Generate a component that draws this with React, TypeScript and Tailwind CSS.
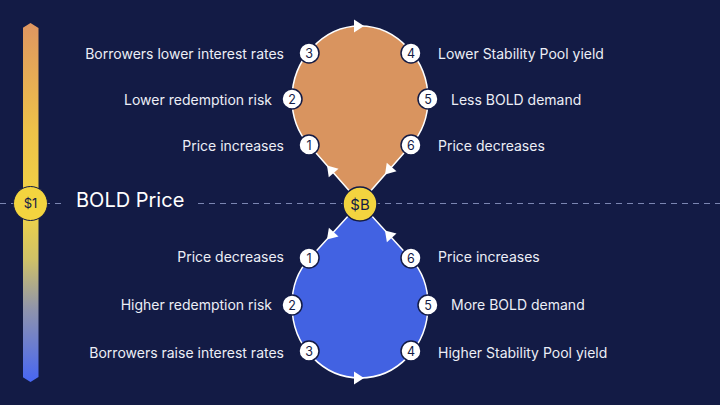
import React from "react";

type Row = { text: string; inner: boolean };

const topLeft: Row[] = [
  { text: "Borrowers lower interest rates", inner: false },
  { text: "Lower redemption risk", inner: true },
  { text: "Price increases", inner: false },
];
const topRight: Row[] = [
  { text: "Lower Stability Pool yield", inner: false },
  { text: "Less BOLD demand", inner: true },
  { text: "Price decreases", inner: false },
];
const bottomLeft: Row[] = [
  { text: "Price decreases", inner: false },
  { text: "Higher redemption risk", inner: true },
  { text: "Borrowers raise interest rates", inner: false },
];
const bottomRight: Row[] = [
  { text: "Price increases", inner: false },
  { text: "More BOLD demand", inner: true },
  { text: "Higher Stability Pool yield", inner: false },
];

function arrow(cx: number, cy: number, dx: number, dy: number) {
  const l = Math.hypot(dx, dy);
  const ux = dx / l;
  const uy = dy / l;
  const px = -uy;
  const py = ux;
  const pts = [
    [cx + ux * 6, cy + uy * 6],
    [cx - ux * 4 + px * 6.5, cy - uy * 4 + py * 6.5],
    [cx - ux * 4 - px * 6.5, cy - uy * 4 - py * 6.5],
  ];
  return pts.map((p) => p.join(",")).join(" ");
}

function Num({ x, y, n }: { x: number; y: number; n: number }) {
  return (
    <g>
      <circle cx={x} cy={y} r={10} fill="#ffffff" stroke="#131b45" strokeWidth={1.5} />
      <text
        x={x}
        y={y + 0.5}
        textAnchor="middle"
        dominantBaseline="central"
        fontSize={12.5}
        fontFamily="Inter, sans-serif"
        fill="#131b45"
      >
        {n}
      </text>
    </g>
  );
}

function Loops() {
  return (
    <svg
      width={148}
      height={405}
      viewBox="286 0 148 405"
      className="overflow-visible"
    >
      <path
        d="M360,203 L309,145 C296,130.5 292,115 292,99 C292,60 323,26 360,26 C397,26 428,60 428,99 C428,115 424,130.5 411,145 Z"
        fill="#d9945f"
        stroke="#ffffff"
        strokeWidth={1.5}
      />
      <path
        d="M360,203 L309,259 C296,273 292,289 292,305 C292,346 323,378 360,378 C397,378 428,346 428,305 C428,289 424,273 411,259 Z"
        fill="#4262e2"
        stroke="#ffffff"
        strokeWidth={1.5}
      />
      <polygon points={arrow(358, 26, 1, 0)} fill="#ffffff" />
      <polygon points={arrow(331, 170, -51, -58)} fill="#ffffff" />
      <polygon points={arrow(389, 170, -51, 58)} fill="#ffffff" />
      <polygon points={arrow(331, 235, -51, 56)} fill="#ffffff" />
      <polygon points={arrow(389, 235, -51, -56)} fill="#ffffff" />
      <polygon points={arrow(358, 378, 1, 0)} fill="#ffffff" />

      <Num x={309} y={53} n={3} />
      <Num x={411} y={53} n={4} />
      <Num x={292} y={99} n={2} />
      <Num x={428} y={99} n={5} />
      <Num x={309} y={145} n={1} />
      <Num x={411} y={145} n={6} />

      <Num x={309} y={258} n={1} />
      <Num x={411} y={258} n={6} />
      <Num x={292} y={305} n={2} />
      <Num x={428} y={305} n={5} />
      <Num x={309} y={351} n={3} />
      <Num x={411} y={351} n={4} />

      <circle cx={360} cy={204} r={17} fill="#f3d43f" stroke="#131b45" strokeWidth={1.5} />
      <text
        x={360}
        y={204.5}
        textAnchor="middle"
        dominantBaseline="central"
        fontSize={15}
        fontFamily="Inter, sans-serif"
        fill="#131b45"
      >
        $B
      </text>
    </svg>
  );
}

function Label({ row, side }: { row: Row; side: "left" | "right" }) {
  const pad =
    side === "left"
      ? row.inner
        ? "justify-end pr-[14px]"
        : "justify-end pr-[2px]"
      : row.inner
        ? "pl-[17px]"
        : "pl-[4px]";
  return (
    <div className={`flex items-center whitespace-nowrap ${pad}`}>
      {row.text}
    </div>
  );
}

function Column({
  top,
  bottom,
  side,
  middle,
}: {
  top: Row[];
  bottom: Row[];
  side: "left" | "right";
  middle?: React.ReactNode;
}) {
  return (
    <div className="flex flex-col pt-[30px] text-[14px] text-[#eceef6]">
      <div className="grid grid-rows-[46px_46px_46px]">
        {top.map((r) => (
          <Label key={r.text} row={r} side={side} />
        ))}
      </div>
      <div className="flex h-[64px] items-center">{middle}</div>
      <div className="grid grid-rows-[48px_48px_48px] pt-0">
        {bottom.map((r) => (
          <Label key={r.text} row={r} side={side} />
        ))}
      </div>
    </div>
  );
}

export default function App() {
  return (
    <div
      className="relative isolate h-[405px] w-[720px] overflow-hidden bg-[#131b45]"
      style={{ fontFamily: "Inter, 'Noto Sans', sans-serif" }}
    >
      <div className="absolute left-0 right-0 top-[203px] h-px bg-[repeating-linear-gradient(90deg,#7b86b2_0_6px,transparent_6px_11px)]" />

      <div className="relative z-10 flex h-full">
        <div className="relative flex w-[61px] justify-center py-[23px]">
          <div className="w-[16px] bg-[linear-gradient(180deg,#df9661_0%,#eec249_30%,#f2d445_52%,#cfc168_66%,#8e93ad_80%,#4766f4_100%)] [clip-path:polygon(50%_0,100%_5px,100%_calc(100%-5px),50%_100%,0_calc(100%-5px),0_5px)]" />
          <div className="absolute left-[13px] top-[186px] flex h-[35px] w-[35px] items-center justify-center rounded-full border-[1.5px] border-[#131b45] bg-[#f3d43f] text-[13px] text-[#131b45]">
            $1
          </div>
        </div>

        <div className="w-[225px]">
          <Column
            top={topLeft}
            bottom={bottomLeft}
            side="left"
            middle={
              <span className="ml-[3px] bg-[#131b45] px-[12px] text-[20px] text-white">
                BOLD Price
              </span>
            }
          />
        </div>

        <Loops />

        <div className="flex-1">
          <Column top={topRight} bottom={bottomRight} side="right" />
        </div>
      </div>
    </div>
  );
}
